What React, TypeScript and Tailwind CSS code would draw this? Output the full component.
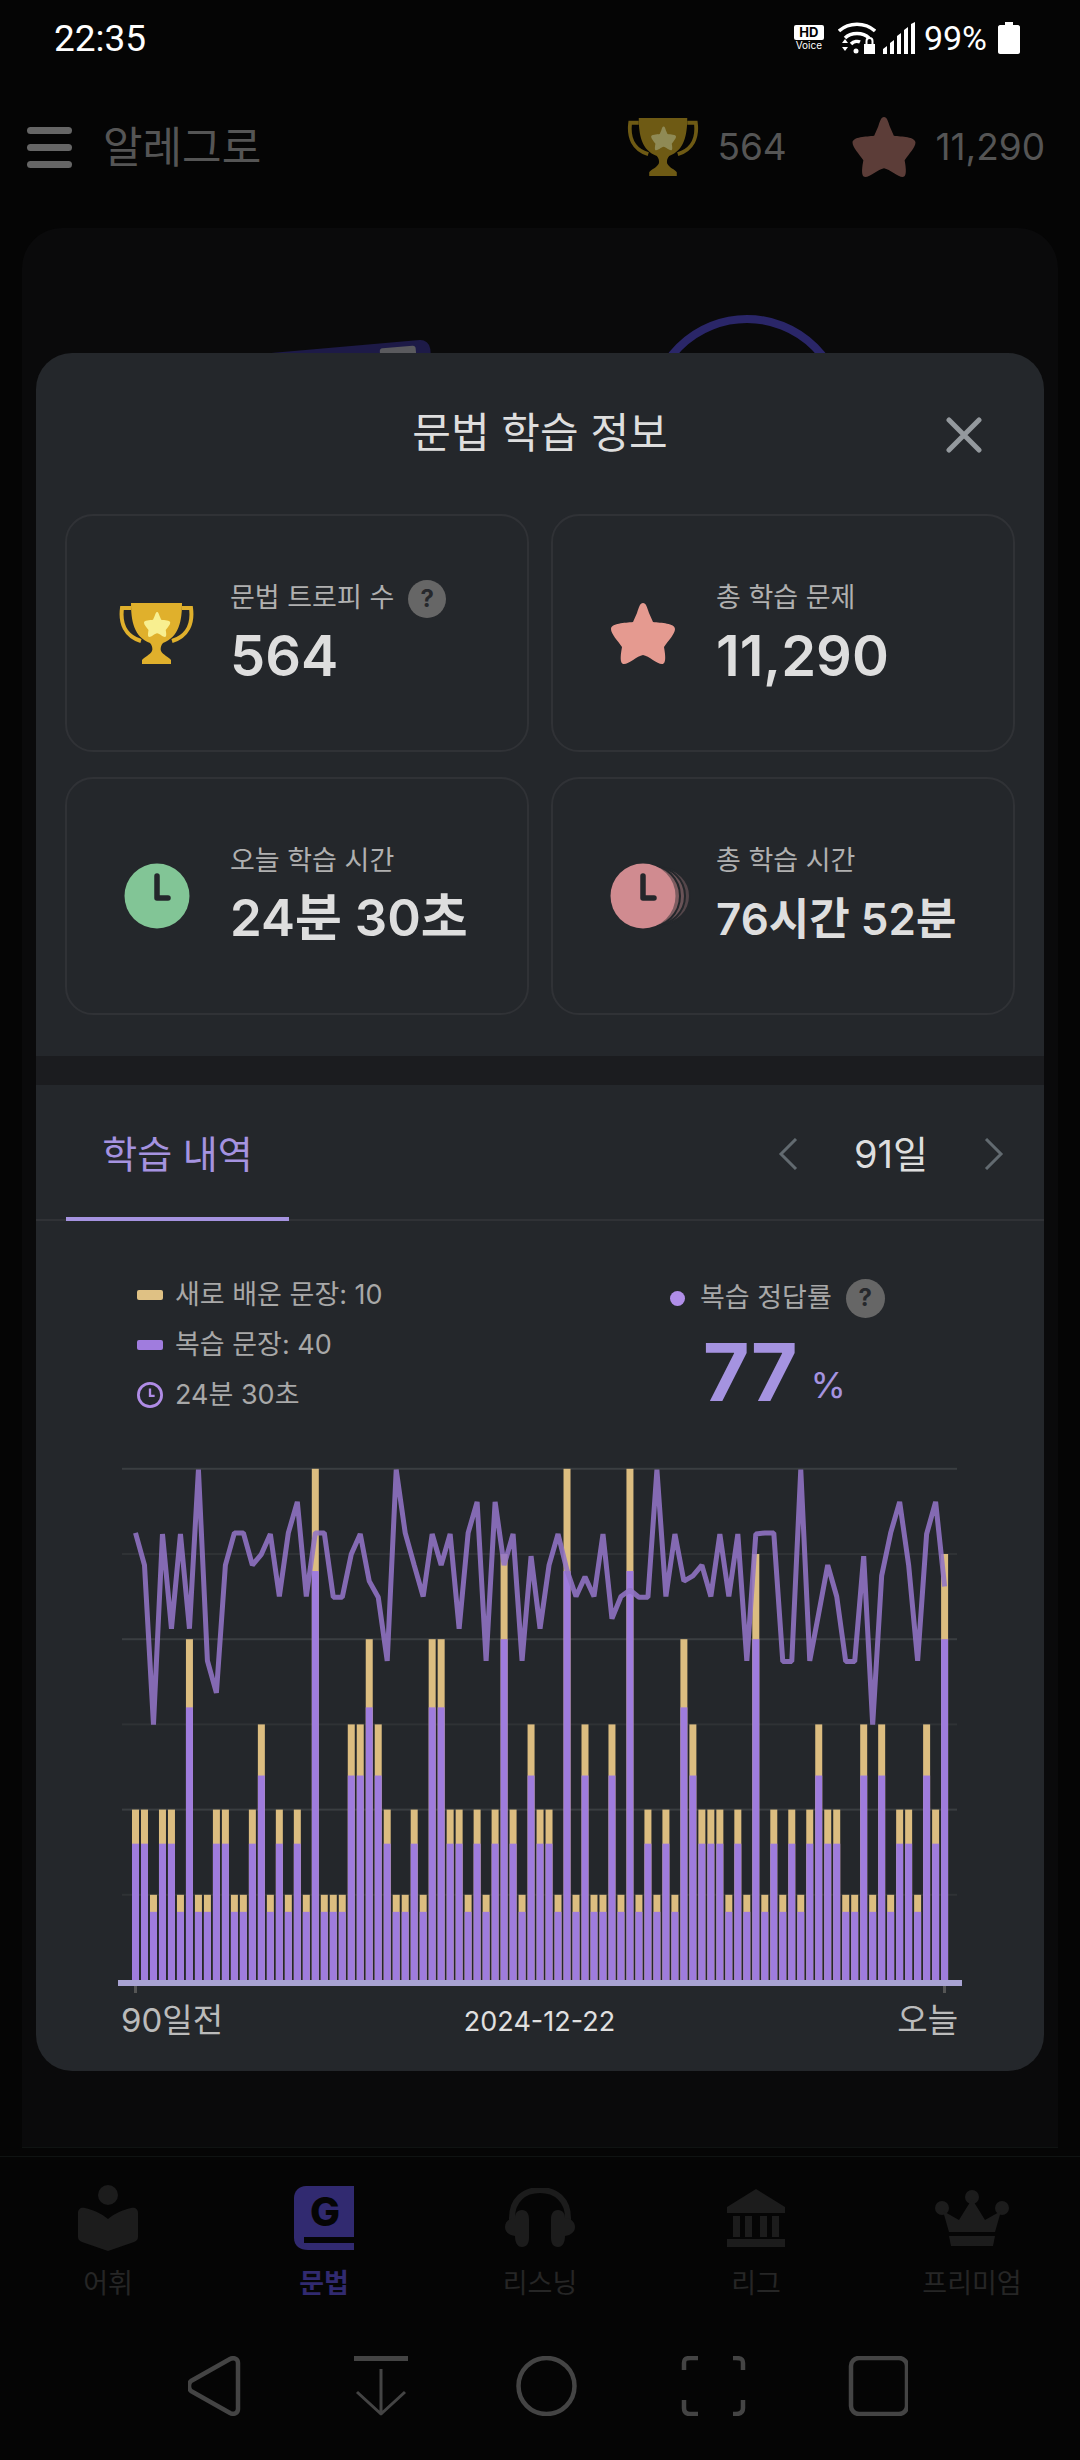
import React from 'react';

const BARS = [
  2, 2, 1, 2, 2, 1, 4, 1, 1, 2, 2, 1, 1, 2, 3, 1, 2, 1, 2, 1, 6, 1, 1, 1, 3, 3, 4, 3, 2, 1, 1, 2, 1, 4, 4, 2, 2, 1, 2, 1, 2, 5, 2, 1, 3, 2,
  2, 1, 6, 1, 3, 1, 1, 3, 1, 6, 1, 2, 1, 2, 1, 4, 3, 2, 2, 2, 1, 2, 1, 5, 1, 2, 1, 2, 1, 2, 3, 2, 2, 1, 1, 3, 1, 3, 1, 2, 2, 1, 3, 2, 5,
];

// y values as read off the reference crop, see lineY()
const LINE = [
  235, 325, 772, 238, 503, 238, 503, 58, 593, 683, 325, 235, 235, 325, 295, 238, 413, 235, 148, 413, 235, 235, 415, 415, 295, 238, 370, 415, 593, 58, 235, 325, 413, 238, 325, 238, 503, 235, 148, 593, 148, 325, 238, 593, 300, 503,
  325, 238, 340, 413, 358, 413, 238, 475, 413, 395, 415, 415, 58, 413, 238, 370, 355, 325, 413, 238, 413, 238, 593, 238, 235, 235, 595, 595, 58, 593, 460, 325, 413, 595, 595, 300, 772, 355, 235, 148, 325, 593, 238, 148, 385,
];

const UNIT = 85.2;
const BASE = 516;
const lineY = (z: number) => z / 2.8 - 15;

const STAR = 'M32 0C35 0 36 4 38 10L42 19C50 20 64 20 64 26C64 31 57 38 53 44C54 50 56 61 51 61C46 61 38 53 32 52C26 53 18 61 13 61C8 61 10 50 11 44C7 38 0 31 0 26C0 20 14 20 22 19L26 10C28 4 29 0 32 0Z';

const Trophy = ({ cup, star, className }: { cup: string; star: string; className: string }) => (
  <svg viewBox="0 0 75 61" className={className}>
    <path d="M12 5H3C1 20 6 33 22 38" fill="none" stroke={cup} strokeWidth="4" />
    <path d="M63 5H72C74 20 69 33 53 38" fill="none" stroke={cup} strokeWidth="4" />
    <path d="M12 0H63C63 18 60 34 44 40C42 42 41 46 42 48C44 52 50 54 52 57V61H23V57C25 54 31 52 33 48C34 46 33 42 31 40C15 34 12 18 12 0Z" fill={cup} />
    <path d={STAR} fill={star} transform="translate(25 9) scale(0.41 0.41)" />
  </svg>
);

const Star = ({ color, className }: { color: string; className: string }) => (
  <svg viewBox="0 0 64 61" className={className}>
    <path d={STAR} fill={color} />
  </svg>
);

const Help = ({ size }: { size: string }) => (
  <span className={`${size} flex items-center justify-center rounded-full bg-[#666666] text-[24px] font-bold leading-none text-[#26282c]`}>?</span>
);

const Clock = ({ color }: { color: string }) => (
  <svg viewBox="0 0 66 66" className="h-[66px] w-[66px]">
    <circle cx="33" cy="33" r="32.5" fill={color} />
    <path d="M33 13V35H44" fill="none" stroke="#24272b" strokeWidth="5.500" strokeLinejoin="round" strokeLinecap="round" />
  </svg>
);

const StatCard = ({ icon, label, value, size, help }: { icon: React.ReactNode; label: string; value: string; size: string; help?: boolean }) => (
  <div className="flex h-[238px] items-center rounded-[28px] border-2 border-[#303236]">
    <div className="flex w-[163px] shrink-0 justify-center pl-[16px]">{icon}</div>
    <div className="flex flex-col">
      <div className="flex h-[40px] items-center gap-[14px] text-[27px] text-[#b0b0b0]">
        <span>{label}</span>
        {help && <Help size="h-[38px] w-[38px]" />}
      </div>
      <div className={`${size} mt-[5px] flex h-[64px] items-center font-semibold text-[#dedede]`}>{value}</div>
    </div>
  </div>
);

const Chart = () => (
  <svg width="844" height="530" viewBox="0 0 844 530" className="ml-[82px] block">
    {[0, 1, 2, 3, 4, 5].map((g) => (
      <rect key={g} x="4" y={BASE - UNIT * (g + 1) - 1} width="835" height="2" fill={g % 2 === 1 || g === 5 ? '#3a3e41' : '#2f3235'} />
    ))}
    {BARS.map((t, i) => {
      const x = 14 + 8.99 * i;
      const h = t * UNIT;
      return (
        <g key={i}>
          <rect x={x} y={BASE - h} width="7" height={h} fill="#dcbd80" />
          <rect x={x} y={BASE - h * 0.8} width="7" height={h * 0.8} fill="#9f7cdd" />
        </g>
      );
    })}
    <polyline
      points={LINE.map((z, i) => `${17.5 + 8.99 * i},${lineY(z)}`).join(' ')}
      fill="none"
      stroke="#9274c6"
      strokeOpacity="0.88"
      strokeWidth="5"
      strokeLinejoin="bevel"
    />
    <rect x="0" y={BASE} width="844" height="6" fill="#a9a3d3" />
    <rect x="16" y={BASE + 6} width="3" height="7" fill="#555555" />
    <rect x="825" y={BASE + 6} width="3" height="7" fill="#555555" />
  </svg>
);

const StatusIcons = () => (
  <div className="flex items-center">
    <div className="mr-[14px] flex w-[30px] flex-col items-center">
      <span className="flex h-[15px] w-[30px] items-center justify-center rounded-[2px] bg-white text-[13px] font-bold leading-none text-black">HD</span>
      <span className="text-[10px] leading-[11px] text-white">Voice</span>
    </div>
    <svg viewBox="0 0 38 32" className="h-[32px] w-[38px]" fill="none" stroke="white" strokeWidth="3.5">
      <path d="M1 9C11 0 27 0 37 9" />
      <path d="M7 16C13 10 25 10 31 16" />
      <path d="M13 22C16 19 20 19 22 20" />
      <circle cx="18" cy="29" r="2.5" fill="white" stroke="none" />
      <path d="M4 21L7 17L10 21ZM4 25L7 29L10 25Z" fill="white" stroke="none" />
      <rect x="26" y="22" width="11" height="10" fill="white" stroke="none" />
      <path d="M28.500 22V19C28.500 15 34.500 15 34.500 19V22" strokeWidth="2" />
    </svg>
    <svg viewBox="0 0 32 32" className="ml-[7px] h-[32px] w-[32px]" fill="white">
      <path d="M0 32V27L4 24V32ZM7 32V21L11 18V32ZM14 32V14L18 11V32ZM21 32V8L25 5V32ZM28 32V2L32 0V32Z" />
    </svg>
    <span className="ml-[9px] font-['Roboto',sans-serif] text-[34px] leading-none text-white">99%</span>
    <svg viewBox="0 0 22 32" className="ml-[11px] h-[32px] w-[22px]" fill="white">
      <path d="M7 0H15V3H20C21 3 22 4 22 5V30C22 31 21 32 20 32H2C1 32 0 31 0 30V5C0 4 1 3 2 3H7Z" />
    </svg>
  </div>
);

const NAV = [
  {
    label: '어휘',
    icon: (
      <svg viewBox="0 0 60 66" className="h-[66px] w-[60px]" fill="#1c1c1c">
        <ellipse cx="30" cy="10" rx="10" ry="10" />
        <path d="M0 28C0 24 3 22 7 23C15 25 23 28 30 34C37 28 45 25 53 23C57 22 60 24 60 28V52C60 55 58 56 56 57L30 66L4 57C2 56 0 55 0 52Z" />
      </svg>
    ),
  },
  {
    label: '문법',
    active: true,
    icon: (
      <svg viewBox="0 0 60 64" className="h-[64px] w-[60px]">
        <path d="M12 0H60V64H14C6 64 0 60 0 52V12C0 5 5 0 12 0Z" fill="#312a70" />
        <rect x="10" y="51" width="50" height="6" fill="#050505" />
        <text x="31" y="40" textAnchor="middle" fontSize="40" fontWeight="800" fill="#050505">G</text>
      </svg>
    ),
  },
  {
    label: '리스닝',
    icon: (
      <svg viewBox="0 0 70 60" className="h-[60px] w-[70px]" fill="#1c1c1c">
        <path d="M7 34V30C7 12 19 2 35 2C51 2 63 12 63 30V34" fill="none" stroke="#1c1c1c" strokeWidth="6" />
        <path d="M17 22C12 22 10 26 10 30C4 30 0 34 0 39C0 44 4 47 10 48C10 54 12 59 17 59C22 59 24 55 24 50V31C24 26 22 22 17 22Z" />
        <path d="M53 22C58 22 60 26 60 30C66 30 70 34 70 39C70 44 66 47 60 48C60 54 58 59 53 59C48 59 46 55 46 50V31C46 26 48 22 53 22Z" />
      </svg>
    ),
  },
  {
    label: '리그',
    icon: (
      <svg viewBox="0 0 58 58" className="h-[58px] w-[58px]" fill="#1c1c1c">
        <path d="M29 0L58 18V21H0V18Z" />
        <path d="M0 21H58V24H0ZM6 27H13V48H6ZM18 27H25V48H18ZM33 27H40V48H33ZM45 27H52V48H45ZM0 50H58V58H0Z" />
      </svg>
    ),
  },
  {
    label: '프리미엄',
    icon: (
      <svg viewBox="0 0 74 58" className="h-[58px] w-[74px]" fill="#1c1c1c">
        <circle cx="37" cy="8" r="7" />
        <circle cx="7" cy="19" r="7" />
        <circle cx="67" cy="19" r="7" />
        <path d="M37 10L50 31L66 22L60 43H14L8 22L24 31Z" />
        <path d="M14 47H60L58 57H16Z" />
      </svg>
    ),
  },
];

const Modal = () => (
  <div className="absolute left-[36px] top-[353px] h-[1718px] w-[1008px] rounded-[36px] bg-[#24272b]">
    <div className="relative flex h-[161px] items-center justify-center pb-[2px]">
      <h1 className="text-[42px] font-normal text-[#dedede]">문법 학습 정보</h1>
      <svg viewBox="0 0 36 36" className="absolute right-[62px] top-[64px] h-[36px] w-[36px]" stroke="#94999e" strokeWidth="5" strokeLinecap="round">
        <path d="M3 3L33 33M33 3L3 33" />
      </svg>
    </div>

    <div className="grid grid-cols-2 gap-x-[22px] gap-y-[25px] px-[29px]">
      <StatCard
        icon={<Trophy cup="#e0b02c" star="#f8ef90" className="h-[61px] w-[75px]" />}
        label="문법 트로피 수"
        value="564"
        size="text-[56px]"
        help
      />
      <StatCard icon={<Star color="#e59a90" className="h-[61px] w-[64px]" />} label="총 학습 문제" value="11,290" size="text-[56px]" />
      <StatCard icon={<Clock color="#82c596" />} label="오늘 학습 시간" value="24분 30초" size="text-[51px]" />
      <StatCard
        icon={
          <div className="relative h-[66px] w-[66px]">
            <div className="absolute left-[20px] top-[4px] h-[58px] w-[61px] rounded-full border-2 border-[#24272b] bg-[#54464a]" />
            <div className="absolute left-[14px] top-[3px] h-[60px] w-[62px] rounded-full border-2 border-[#24272b] bg-[#6a5357]" />
            <div className="absolute left-[7px] top-[1px] h-[64px] w-[64px] rounded-full border-2 border-[#24272b] bg-[#7d5c60]" />
            <div className="absolute left-0 top-0">
              <Clock color="#d08b90" />
            </div>
          </div>
        }
        label="총 학습 시간"
        value="76시간 52분"
        size="text-[44px]"
      />
    </div>

    <div className="mt-[41px] h-[29px] bg-[#1b1c1f]" />

    <div className="flex h-[136px] items-stretch justify-between border-b-2 border-[#303236] pl-[30px]">
      <div className="relative -mb-[2px] flex w-[223px] items-center justify-center border-b-4 border-[#a593e0] pt-[6px] text-[38px] text-[#a593e0]">학습 내역</div>
      <div className="flex items-center pt-[4px]">
        <svg viewBox="0 0 20 32" className="h-[32px] w-[20px]" fill="none" stroke="#626a70" strokeWidth="3">
          <path d="M18 1L3 16L18 31" />
        </svg>
        <span className="w-[186px] text-center text-[38px] text-[#dedede]">91일</span>
        <svg viewBox="0 0 20 32" className="mr-[40px] h-[32px] w-[20px]" fill="none" stroke="#626a70" strokeWidth="3">
          <path d="M2 1L17 16L2 31" />
        </svg>
      </div>
    </div>

    <div className="flex h-[243px] pl-[101px] pt-[49px]">
      <div className="w-[533px] text-[27px] text-[#a8a8a8]">
        <div className="flex h-[50px] items-center gap-[12px]">
          <span className="h-[10px] w-[26px] rounded-[2px] bg-[#dfc184]" />
          <span>새로 배운 문장: 10</span>
        </div>
        <div className="flex h-[50px] items-center gap-[12px]">
          <span className="h-[10px] w-[26px] rounded-[2px] bg-[#a07cde]" />
          <span>복습 문장: 40</span>
        </div>
        <div className="flex h-[50px] items-center gap-[12px]">
          <svg viewBox="0 0 28 28" className="h-[28px] w-[26px]" fill="none" stroke="#b08ce6" strokeWidth="3">
            <circle cx="14" cy="14" r="12.500" />
            <path d="M14 7V15H19" strokeWidth="2.500" />
          </svg>
          <span>24분 30초</span>
        </div>
      </div>
      <div className="mt-[8px]">
        <div className="flex h-[40px] items-center">
          <span className="h-[15px] w-[15px] rounded-full bg-[#b08ee8]" />
          <span className="ml-[15px] text-[27px] text-[#a8a8a8]">복습 정답률</span>
          <span className="ml-[14px]"><Help size="h-[39px] w-[39px]" /></span>
        </div>
        <div className="mt-[14px] flex h-[80px] items-center pl-[33px] text-[#a593e0]">
          <span className="text-[80px] font-bold leading-none">77</span>
          <span className="ml-[13px] mt-[26px] text-[36px] leading-none">%</span>
        </div>
      </div>
    </div>

    <Chart />

    <div className="mt-[4px] grid grid-cols-[1fr_auto_1fr] items-center pl-[85px] pr-[86px]">
      <span className="text-[33px] leading-[40px] text-[#bbbbbb]">90일전</span>
      <span className="mt-[4px] text-[27px] leading-[40px] text-[#e0e0e0]">2024-12-22</span>
      <span className="text-right text-[33px] leading-[40px] text-[#bbbbbb]">오늘</span>
    </div>
  </div>
);

export default function App() {
  return (
    <div className="relative flex h-[2460px] w-[1080px] flex-col overflow-hidden bg-[#050505] font-['Inter','Noto_Sans_CJK_KR',sans-serif]">
      <div className="flex h-[76px] shrink-0 items-center justify-between pl-[54px] pr-[60px]">
        <span className="font-['Roboto',sans-serif] text-[37px] leading-none text-white">22:35</span>
        <StatusIcons />
      </div>

      <div className="flex h-[152px] shrink-0 items-start pl-[27px] pr-[35px] pt-[41px]">
        <div className="flex h-[60px] w-[76px] flex-col justify-center gap-[10px]">
          <span className="h-[7px] w-[45px] rounded-full bg-[#666666]" />
          <span className="h-[7px] w-[45px] rounded-full bg-[#666666]" />
          <span className="h-[7px] w-[45px] rounded-full bg-[#666666]" />
        </div>
        <span className="text-[43px] leading-[60px] text-[#555555]">알레그로</span>
        <div className="ml-auto flex items-center">
          <Trophy cup="#6e5a14" star="#8f8a55" className="h-[58px] w-[72px]" />
          <span className="ml-[18px] w-[135px] text-[37px] leading-[60px] text-[#555555]">564</span>
          <Star color="#5c3d38" className="h-[60px] w-[64px]" />
          <span className="ml-[19px] text-[37px] leading-[60px] text-[#555555]">11,290</span>
        </div>
      </div>

      <div className="relative mx-[22px] h-[1920px] shrink-0 rounded-t-[40px] border-b border-[#0f1312] bg-[#0a0a0b]">
        <div className="absolute left-[205px] top-[120px] h-[50px] w-[205px] -rotate-[5deg] rounded-[10px] bg-[#1d1a47]" />
        <div className="absolute left-[358px] top-[119px] h-[12px] w-[36px] -rotate-[5deg] rounded-[3px] bg-[#5a5a5e]" />
        <div className="absolute left-[625px] top-[87px] h-[200px] w-[200px] rounded-full border-[8px] border-[#2a2668]" />
      </div>

      <div className="mt-[8px] flex h-[180px] shrink-0 justify-between border-t border-[#0f1312] pt-[27px]">
        {NAV.map((n) => (
          <div key={n.label} className="flex w-[216px] flex-col items-center">
            <div className="flex h-[68px] items-center">{n.icon}</div>
            <span className={n.active ? 'mt-[14px] text-[27px] font-bold leading-[36px] text-[#312a70]' : 'mt-[14px] text-[27px] leading-[36px] text-[#262626]'}>{n.label}</span>
          </div>
        ))}
      </div>

      <div className="flex flex-1 items-start justify-center pl-[16px] pt-[20px]">
        <svg viewBox="0 0 720 60" className="h-[60px] w-[720px]" fill="none" stroke="#444444" strokeWidth="4.500" strokeLinejoin="round">
          <path d="M1 30C1 28 2 26 3 25L42 3C46 1 50 3 50 7V53C50 57 46 59 42 57L3 35C2 34 1 32 1 30Z" />
          <path d="M166 2H220" strokeWidth="6" />
          <path d="M193 13V57M169 36L193 58L217 36" strokeWidth="3" />
          <ellipse cx="358.500" cy="30" rx="28" ry="28" />
          <path d="M496 14V7C496 3 498 2 502 2H510M545 2H548C553 2 555 3 555 7V14M496 44V52C496 56 498 58 502 58H510M545 58H548C553 58 555 56 555 52V44" />
          <rect x="663" y="2" width="56" height="56" rx="8" />
        </svg>
      </div>

      <Modal />
    </div>
  );
}
